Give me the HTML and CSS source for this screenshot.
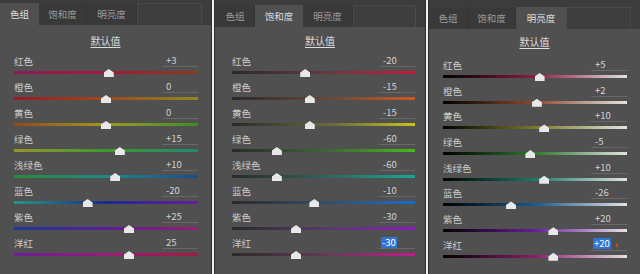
FILE: index.html
```html
<!DOCTYPE html>
<html lang="zh">
<head>
<meta charset="utf-8">
<link rel="stylesheet" href="styles.css">
</head>
<body>
<div class="panel p1">
  <div class="tabbar">
    <div class="tab active">色组</div>
    <div class="tab">饱和度</div>
    <div class="tab">明亮度</div>
    <div class="filler"></div>
  </div>
  <div class="heading"><span>默认值</span></div>
  <div class="rows">
    <div class="row"><div class="lbl"><span>红色</span><span class="val">+3</span></div><div class="slider"><div class="track h-red"></div><i class="thumb" style="left:51.5%"></i></div></div>
    <div class="row"><div class="lbl"><span>橙色</span><span class="val">0</span></div><div class="slider"><div class="track h-orange"></div><i class="thumb" style="left:50%"></i></div></div>
    <div class="row"><div class="lbl"><span>黄色</span><span class="val">0</span></div><div class="slider"><div class="track h-yellow"></div><i class="thumb" style="left:50%"></i></div></div>
    <div class="row"><div class="lbl"><span>绿色</span><span class="val">+15</span></div><div class="slider"><div class="track h-green"></div><i class="thumb" style="left:57.5%"></i></div></div>
    <div class="row"><div class="lbl"><span>浅绿色</span><span class="val">+10</span></div><div class="slider"><div class="track h-aqua"></div><i class="thumb" style="left:55%"></i></div></div>
    <div class="row"><div class="lbl"><span>蓝色</span><span class="val">-20</span></div><div class="slider"><div class="track h-blue"></div><i class="thumb" style="left:40%"></i></div></div>
    <div class="row"><div class="lbl"><span>紫色</span><span class="val">+25</span></div><div class="slider"><div class="track h-purple"></div><i class="thumb" style="left:62.5%"></i></div></div>
    <div class="row"><div class="lbl"><span>洋红</span><span class="val">25</span></div><div class="slider"><div class="track h-magenta"></div><i class="thumb" style="left:62.5%"></i></div></div>
  </div>
</div>
<div class="panel p2">
  <div class="tabbar">
    <div class="tab">色组</div>
    <div class="tab active">饱和度</div>
    <div class="tab">明亮度</div>
    <div class="filler"></div>
  </div>
  <div class="heading"><span>默认值</span></div>
  <div class="rows">
    <div class="row"><div class="lbl"><span>红色</span><span class="val">-20</span></div><div class="slider"><div class="track s-red"></div><i class="thumb" style="left:40%"></i></div></div>
    <div class="row"><div class="lbl"><span>橙色</span><span class="val">-15</span></div><div class="slider"><div class="track s-orange"></div><i class="thumb" style="left:42.5%"></i></div></div>
    <div class="row"><div class="lbl"><span>黄色</span><span class="val">-15</span></div><div class="slider"><div class="track s-yellow"></div><i class="thumb" style="left:42.5%"></i></div></div>
    <div class="row"><div class="lbl"><span>绿色</span><span class="val">-60</span></div><div class="slider"><div class="track s-green"></div><i class="thumb" style="left:24.5%"></i></div></div>
    <div class="row"><div class="lbl"><span>浅绿色</span><span class="val">-60</span></div><div class="slider"><div class="track s-aqua"></div><i class="thumb" style="left:24.5%"></i></div></div>
    <div class="row"><div class="lbl"><span>蓝色</span><span class="val">-10</span></div><div class="slider"><div class="track s-blue"></div><i class="thumb" style="left:45%"></i></div></div>
    <div class="row"><div class="lbl"><span>紫色</span><span class="val">-30</span></div><div class="slider"><div class="track s-purple"></div><i class="thumb" style="left:35%"></i></div></div>
    <div class="row"><div class="lbl"><span>洋红</span><span class="val"><span class="sel">-30</span></span></div><div class="slider"><div class="track s-magenta"></div><i class="thumb" style="left:35%"></i></div></div>
  </div>
</div>
<div class="panel p3">
  <div class="tabbar">
    <div class="tab">色组</div>
    <div class="tab">饱和度</div>
    <div class="tab active">明亮度</div>
    <div class="filler"></div>
  </div>
  <div class="heading"><span>默认值</span></div>
  <div class="rows">
    <div class="row"><div class="lbl"><span>红色</span><span class="val">+5</span></div><div class="slider"><div class="track l-red"></div><i class="thumb" style="left:52.5%"></i></div></div>
    <div class="row"><div class="lbl"><span>橙色</span><span class="val">+2</span></div><div class="slider"><div class="track l-orange"></div><i class="thumb" style="left:51%"></i></div></div>
    <div class="row"><div class="lbl"><span>黄色</span><span class="val">+10</span></div><div class="slider"><div class="track l-yellow"></div><i class="thumb" style="left:55%"></i></div></div>
    <div class="row"><div class="lbl"><span>绿色</span><span class="val">-5</span></div><div class="slider"><div class="track l-green"></div><i class="thumb" style="left:47.5%"></i></div></div>
    <div class="row"><div class="lbl"><span>浅绿色</span><span class="val">+10</span></div><div class="slider"><div class="track l-aqua"></div><i class="thumb" style="left:55%"></i></div></div>
    <div class="row"><div class="lbl"><span>蓝色</span><span class="val">-26</span></div><div class="slider"><div class="track l-blue"></div><i class="thumb" style="left:37%"></i></div></div>
    <div class="row"><div class="lbl"><span>紫色</span><span class="val">+20</span></div><div class="slider"><div class="track l-purple"></div><i class="thumb" style="left:60%"></i></div></div>
    <div class="row"><div class="lbl"><span>洋红</span><span class="val"><span class="sel">+20</span><span class="caret"></span></span></div><div class="slider"><div class="track l-magenta"></div><i class="thumb" style="left:60%"></i></div></div>
  </div>
</div>
</body>
</html>
```
FILE: styles.css
```css
html, body {
  margin: 0;
  padding: 0;
}
body {
  width: 640px;
  height: 274px;
  overflow: hidden;
  background: #f2f2f2;
  display: flex;
  gap: 2px;
  font-family: "Noto Sans CJK SC", "Noto Sans", sans-serif;
  font-size: 9.5px;
  color: #cccccc;
}
.panel {
  width: 212px;
  height: 274px;
  box-sizing: border-box;
  background: #505050;
  display: flex;
  flex-direction: column;
}
.p1 { border-right: 1px solid #2e2e2e; }
.p2 { border-left: 1px solid #2e2e2e; border-right: 1px solid #2e2e2e; }
.p3 { border-left: 1px solid #2e2e2e; }

.tabbar {
  display: flex;
  background: #3c3c3c;
  padding-top: 3px;
  height: 25px;
  box-sizing: border-box;
  flex: none;
}
.p2 .tabbar { padding-top: 5px; height: 27px; padding-left: 1px; }
.p3 .tabbar { padding-top: 7px; height: 29px; padding-left: 0; }
.tab {
  display: flex;
  align-items: center;
  justify-content: center;
  color: #9c9c9c;
  background: #393939;
  border-right: 1px solid #333;
  box-sizing: border-box;
}
.tab:nth-child(1) { width: 39px; }
.tab:nth-child(2) { width: 48px; }
.tab:nth-child(3) { width: 50px; }
.tab.active {
  background: #505050;
  color: #dedede;
  border-right: none;
}
.filler {
  flex: 1;
  margin-right: 9px;
  background: #3e3e3e;
  border: 1px solid #4a4a4a;
  border-bottom: none;
}

.heading {
  text-align: center;
  padding-top: 10px;
  height: 30px;
  box-sizing: border-box;
  line-height: 12px;
  font-size: 10px;
  color: #dcdcdc;
  flex: none;
}
.p2 .heading { height: 28px; padding-top: 8px; }
.p3 .heading { height: 30px; padding-top: 7px; }
.heading span {
  text-decoration: underline;
  text-underline-offset: 2px;
}

.rows {
  padding: 0 13px 0 14px;
}
.p2 .rows { padding: 0 10px 0 17px; }
.p3 .rows { padding: 0 13px 0 14px; }
.row {
  height: 26px;
}
.p3 .row { height: 25.7px; }
.lbl {
  display: flex;
  justify-content: space-between;
  align-items: flex-end;
  height: 12px;
  line-height: 12px;
  white-space: nowrap;
}
.val {
  width: 36px;
  box-sizing: border-box;
  padding-left: 4px;
  border-bottom: 1px solid #686868;
  height: 13px;
  line-height: 12px;
  color: #d0d0d0;
  display: flex;
  align-items: center;
}
.sel {
  background: #2f74d4;
  color: #ffffff;
  padding: 0 1px;
  margin-left: -2px;
  line-height: 11px;
}
.caret {
  display: inline-block;
  width: 2px;
  height: 3px;
  background: #b8541c;
  margin-left: 5px;
  margin-top: 4px;
}
.slider {
  position: relative;
  height: 9px;
  margin-top: 1px;
}
.track {
  position: absolute;
  left: 0;
  right: 0;
  top: 3px;
  height: 3px;
}
.thumb {
  position: absolute;
  top: 1px;
  width: 10px;
  height: 8px;
  margin-left: -5px;
  background: #e8e8e8;
  clip-path: polygon(50% 0, 100% 45%, 100% 100%, 0 100%, 0 45%);
}

/* hue */
.h-red { background: linear-gradient(90deg, #8c1c58, #a11a3a 50%, #8a3a1e); }
.h-orange { background: linear-gradient(90deg, #941c24, #a0481a 50%, #8e8a22); }
.h-yellow { background: linear-gradient(90deg, #94481a, #a09a22 50%, #3e8e24); }
.h-green { background: linear-gradient(90deg, #96962a, #3c9a2c 50%, #228a74); }
.h-aqua { background: linear-gradient(90deg, #2a8c3a, #1c8a86 50%, #1c4c8e); }
.h-blue { background: linear-gradient(90deg, #2a9484, #1a2c8c 50%, #6a1c9a); }
.h-purple { background: linear-gradient(90deg, #1c3a98, #5a1c9c 50%, #9a1c76); }
.h-magenta { background: linear-gradient(90deg, #6a1c9a, #9a1c7a 50%, #a21c3a); }

/* saturation */
.s-red { background: linear-gradient(90deg, #2a2a2a, #6a3a42 55%, #c8183e); }
.s-orange { background: linear-gradient(90deg, #2a2a2a, #6a4a3a 55%, #cc5a20); }
.s-yellow { background: linear-gradient(90deg, #2a2a2a, #6a6a3a 55%, #c8c41e); }
.s-green { background: linear-gradient(90deg, #2a2a2a, #3e6a36 55%, #44bc1a); }
.s-aqua { background: linear-gradient(90deg, #2a2a2a, #2e6a60 55%, #14aa92); }
.s-blue { background: linear-gradient(90deg, #2a2a2a, #34506e 55%, #1a6ccc); }
.s-purple { background: linear-gradient(90deg, #2a2a2a, #5a3a6e 55%, #8c18c4); }
.s-magenta { background: linear-gradient(90deg, #2a2a2a, #6a3a5a 55%, #c41a8c); }

/* luminance */
.l-red { background: linear-gradient(90deg, #000, #8e1c40 50%, #e2e2e2); }
.l-orange { background: linear-gradient(90deg, #000, #8e4a2a 50%, #e2e2e2); }
.l-yellow { background: linear-gradient(90deg, #000, #7a7a26 50%, #e2e2e2); }
.l-green { background: linear-gradient(90deg, #000, #2a7a2a 50%, #e2e2e2); }
.l-aqua { background: linear-gradient(90deg, #000, #1a7a6a 50%, #e2e2e2); }
.l-blue { background: linear-gradient(90deg, #000, #1a5a8e 50%, #e2e2e2); }
.l-purple { background: linear-gradient(90deg, #000, #6a1c9c 50%, #e2e2e2); }
.l-magenta { background: linear-gradient(90deg, #000, #8e1c6a 50%, #e2e2e2); }
```
